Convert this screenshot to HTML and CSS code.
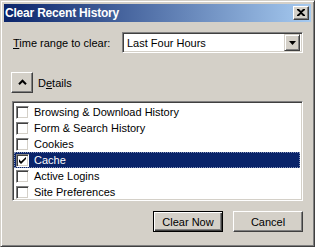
FILE: index.html
```html
<!DOCTYPE html>
<html>
<head>
<meta charset="utf-8">
<link rel="stylesheet" href="styles.css">
</head>
<body>
<div class="window">
  <div class="titlebar">
    <span class="title">Clear Recent History</span>
    <span class="close"><svg width="8" height="7" viewBox="0 0 8 7"><path d="M0 0h2l2 2 2-2h2v1L5 3.5 8 6v1H6L4 5 2 7H0V6l3-2.5L0 1z" fill="#000"/></svg></span>
  </div>
  <div class="content">
    <div class="range-row">
      <span class="label"><u>T</u>ime range to clear:</span>
      <div class="combo">
        <span class="combo-text">Last Four Hours</span>
        <span class="drop"><svg width="7" height="4" viewBox="0 0 7 4"><path d="M0 0h7L3.5 4z" fill="#000"/></svg></span>
      </div>
    </div>
    <div class="details-row">
      <span class="toggle"><svg width="9" height="6" viewBox="0 0 9 6"><path d="M1 5.2L4.5 1.7 8 5.2" fill="none" stroke="#000" stroke-width="2"/></svg></span>
      <span class="label">D<u>e</u>tails</span>
    </div>
    <ul class="list">
      <li class="item"><span class="check"></span>Browsing &amp; Download History</li>
      <li class="item"><span class="check"></span>Form &amp; Search History</li>
      <li class="item"><span class="check"></span>Cookies</li>
      <li class="item selected"><span class="check"><svg width="7" height="7" viewBox="0 0 7 7"><path d="M0 2v3l2 2 5-5V-0L2 4.5z" fill="#000"/></svg></span>Cache</li>
      <li class="item"><span class="check"></span>Active Logins</li>
      <li class="item"><span class="check"></span>Site Preferences</li>
    </ul>
    <div class="actions">
      <span class="btn default">Clear Now</span>
      <span class="btn">Cancel</span>
    </div>
  </div>
</div>
</body>
</html>
```
FILE: styles.css
```css
html, body {
  margin: 0;
  padding: 0;
  background: #d4d0c8;
}
body {
  font-family: "Liberation Sans", Arial, sans-serif;
  font-size: 11px;
  color: #000;
}
.window {
  width: 315px;
  height: 247px;
  box-sizing: border-box;
  border: 1px solid;
  border-color: #d4d0c8 #404040 #404040 #d4d0c8;
  box-shadow: inset 1px 1px #fff, inset -1px -1px #808080;
  padding: 3px;
  background: #d4d0c8;
  display: flex;
  flex-direction: column;
}
.titlebar {
  height: 18px;
  background: linear-gradient(to right, #0a246a, #a6caf0);
  display: flex;
  align-items: center;
  justify-content: space-between;
  padding: 0 2px 0 1px;
}
.title {
  color: #fff;
  font-weight: bold;
  font-size: 12px;
  letter-spacing: -0.2px;
}
.close {
  width: 16px;
  height: 14px;
  box-sizing: border-box;
  background: #d4d0c8;
  border: 1px solid;
  border-color: #fff #404040 #404040 #fff;
  box-shadow: inset -1px -1px #808080;
  display: flex;
  align-items: center;
  justify-content: center;
  padding-bottom: 1px;
}
.content {
  display: flex;
  flex-direction: column;
  padding: 0 7px 0 7px;
}
.range-row {
  margin-top: 10px;
  display: flex;
  align-items: center;
  justify-content: space-between;
  padding-left: 2px;
  padding-right: 1px;
}
.label u { text-decoration: underline; text-underline-offset: 1px; }
.combo {
  width: 181px;
  height: 21px;
  box-sizing: border-box;
  border: 1px solid;
  border-color: #808080 #fff #fff #808080;
  box-shadow: inset 1px 1px #404040, inset -1px -1px #d4d0c8;
  background: #fff;
  display: flex;
  align-items: center;
  justify-content: space-between;
  padding: 2px;
}
.combo-text {
  padding-left: 2px;
  font-size: 11px;
}
.drop {
  width: 16px;
  height: 17px;
  box-sizing: border-box;
  background: #d4d0c8;
  border: 1px solid;
  border-color: #d4d0c8 #404040 #404040 #d4d0c8;
  box-shadow: inset 1px 1px #fff, inset -1px -1px #808080;
  display: flex;
  align-items: center;
  justify-content: center;
}
.details-row {
  margin-top: 19px;
  display: flex;
  align-items: center;
  gap: 5px;
}
.toggle {
  width: 22px;
  height: 21px;
  box-sizing: border-box;
  background: #d4d0c8;
  border: 1px solid;
  border-color: #fff #404040 #404040 #fff;
  box-shadow: inset -1px -1px #808080;
  display: flex;
  align-items: center;
  justify-content: center;
  padding-bottom: 1px;
}
.list {
  list-style: none;
  margin: 8px 1px 0 1px;
  height: 100px;
  box-sizing: border-box;
  border: 1px solid;
  border-color: #808080 #fff #fff #808080;
  box-shadow: inset 1px 1px #404040, inset -1px -1px #d4d0c8;
  background: #fff;
  padding: 2px 2px 1px 1px;
}
.item {
  height: 16px;
  display: flex;
  align-items: center;
  padding-left: 2px;
  box-sizing: border-box;
  white-space: nowrap;
}
.item.selected {
  background: #0a246a;
  color: #fff;
  outline: 1px dotted #8794b8;
  outline-offset: -1px;
}
.check {
  width: 13px;
  height: 13px;
  box-sizing: border-box;
  background: #fff;
  border: 1px solid;
  border-color: #808080 #fff #fff #808080;
  box-shadow: inset 1px 1px #404040, inset -1px -1px #d4d0c8;
  margin-right: 5px;
  display: flex;
  align-items: center;
  justify-content: center;
  flex: none;
}
.actions {
  margin-top: 10px;
  display: flex;
  justify-content: flex-end;
  gap: 10px;
  padding-right: 1px;
}
.btn {
  width: 70px;
  height: 21px;
  box-sizing: border-box;
  background: #d4d0c8;
  border: 1px solid;
  border-color: #fff #404040 #404040 #fff;
  box-shadow: inset -1px -1px #808080;
  display: flex;
  align-items: center;
  justify-content: center;
  font-size: 11px;
}
.btn.default {
  border-color: #000;
  box-shadow: inset 1px 1px #fff, inset -1px -1px #404040, inset -2px -2px #808080;
}
```
